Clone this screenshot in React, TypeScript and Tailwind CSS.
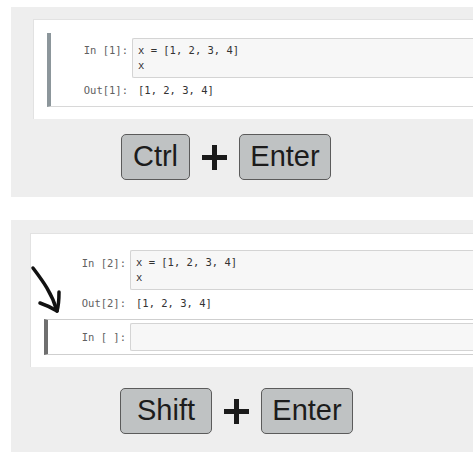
const mono = { fontFamily: '"DejaVu Sans Mono", "Liberation Mono", monospace' }

function Prompt({ label, w }: { label: string; w: string }) {
  return (
    <div className={`${w} shrink-0 pr-[4px] text-right text-[10.5px] leading-[15px] text-[#616161]`} style={mono}>
      {label}
    </div>
  )
}

function InputBox({ lines, h }: { lines: string[]; h: string }) {
  return (
    <div
      className={`flex-1 ${h} bg-[#f7f7f7] border border-[#d4d4d4] rounded-l-[2px] border-r-0 px-[5px] pt-[4px] text-[10.5px] leading-[15px] text-[#333]`}
      style={mono}
    >
      {lines.map((l, i) => (
        <div key={i} className="whitespace-pre">{l}</div>
      ))}
    </div>
  )
}

function Key({ label, w }: { label: string; w: string }) {
  return (
    <div
      className={`${w} h-[46px] flex items-center justify-center rounded-[5px] border border-[#5b5b5b] bg-[#bfc2c3] text-[29px] text-[#1c1c1c]`}
      style={{ fontFamily: '"Liberation Sans", Arial, sans-serif' }}
    >
      {label}
    </div>
  )
}

function Plus() {
  return (
    <div className="w-[25px] h-[25px] relative mx-[12px]">
      <div className="absolute left-0 right-0 top-[10px] h-[5px] bg-[#1a1a1a]" />
      <div className="absolute top-0 bottom-0 left-[10px] w-[5px] bg-[#1a1a1a]" />
    </div>
  )
}

export default function App() {
  return (
    <div className="w-[473px] h-[458px] bg-white relative overflow-hidden">
      {/* top example */}
      <div className="ml-[11px] mt-[7px] h-[190px] bg-[#eeeeee] pt-[12px] pl-[22px]">
        <div className="h-[100px] bg-white border-l border-t border-[#e2e2e2] pt-[13px] pl-[13px]">
          <div className="h-[74px] border-l-4 border-l-[#8c969b] border-b border-b-[#d8d8d8] pt-[5px] flex flex-col">
            <div className="flex items-start">
              <Prompt label="In [1]:" w="w-[81px] pt-[5px]" />
              <InputBox lines={['x = [1, 2, 3, 4]', 'x']} h="h-[40px]" />
            </div>
            <div className="flex items-start mt-[5px]">
              <Prompt label="Out[1]:" w="w-[81px]" />
              <div className="pl-[6px] text-[10.5px] leading-[15px] text-[#333] whitespace-pre" style={mono}>[1, 2, 3, 4]</div>
            </div>
          </div>
        </div>
        <div className="flex items-center pl-[88px] mt-[15px]">
          <Key label="Ctrl" w="w-[69px]" />
          <Plus />
          <Key label="Enter" w="w-[92px]" />
        </div>
      </div>

      {/* bottom example */}
      <div className="ml-[11px] mt-[23px] h-[232px] bg-[#eeeeee] pt-[13px] pl-[19px]">
        <div className="h-[134px] bg-white border-l border-t border-[#e2e2e2] pt-[16px] pl-[13px]">
          <div className="border-l-4 border-l-transparent flex flex-col">
            <div className="flex items-start">
              <Prompt label="In [2]:" w="w-[82px] pt-[6px]" />
              <InputBox lines={['x = [1, 2, 3, 4]', 'x']} h="h-[40px]" />
            </div>
            <div className="flex items-start mt-[6px]">
              <Prompt label="Out[2]:" w="w-[82px]" />
              <div className="pl-[6px] text-[10.5px] leading-[15px] text-[#333] whitespace-pre" style={mono}>[1, 2, 3, 4]</div>
            </div>
          </div>
          <div className="mt-[8px] h-[36px] border-l-4 border-l-[#6f6f6f] border-y border-y-[#cfcfcf] flex items-center">
            <Prompt label="In [ ]:" w="w-[82px]" />
            <div className="flex-1 h-[28px] bg-[#f7f7f7] border border-[#d4d4d4] border-r-0 rounded-l-[2px]" />
          </div>
        </div>
        <div className="flex items-center pl-[90px] mt-[21px]">
          <Key label="Shift" w="w-[92px]" />
          <Plus />
          <Key label="Enter" w="w-[92px]" />
        </div>
      </div>

      {/* hand-drawn arrow */}
      <svg className="absolute left-0 top-0 pointer-events-none" width="473" height="458">
        <path d="M33 268 C 42 280, 52 293, 57 311" fill="none" stroke="#111" strokeWidth="3.5" strokeLinecap="round" />
        <path d="M40 303 C 46 305, 52 308, 57 311 C 59 304, 59 298, 59 292" fill="none" stroke="#111" strokeWidth="3.5" strokeLinecap="round" strokeLinejoin="round" />
      </svg>
    </div>
  )
}
